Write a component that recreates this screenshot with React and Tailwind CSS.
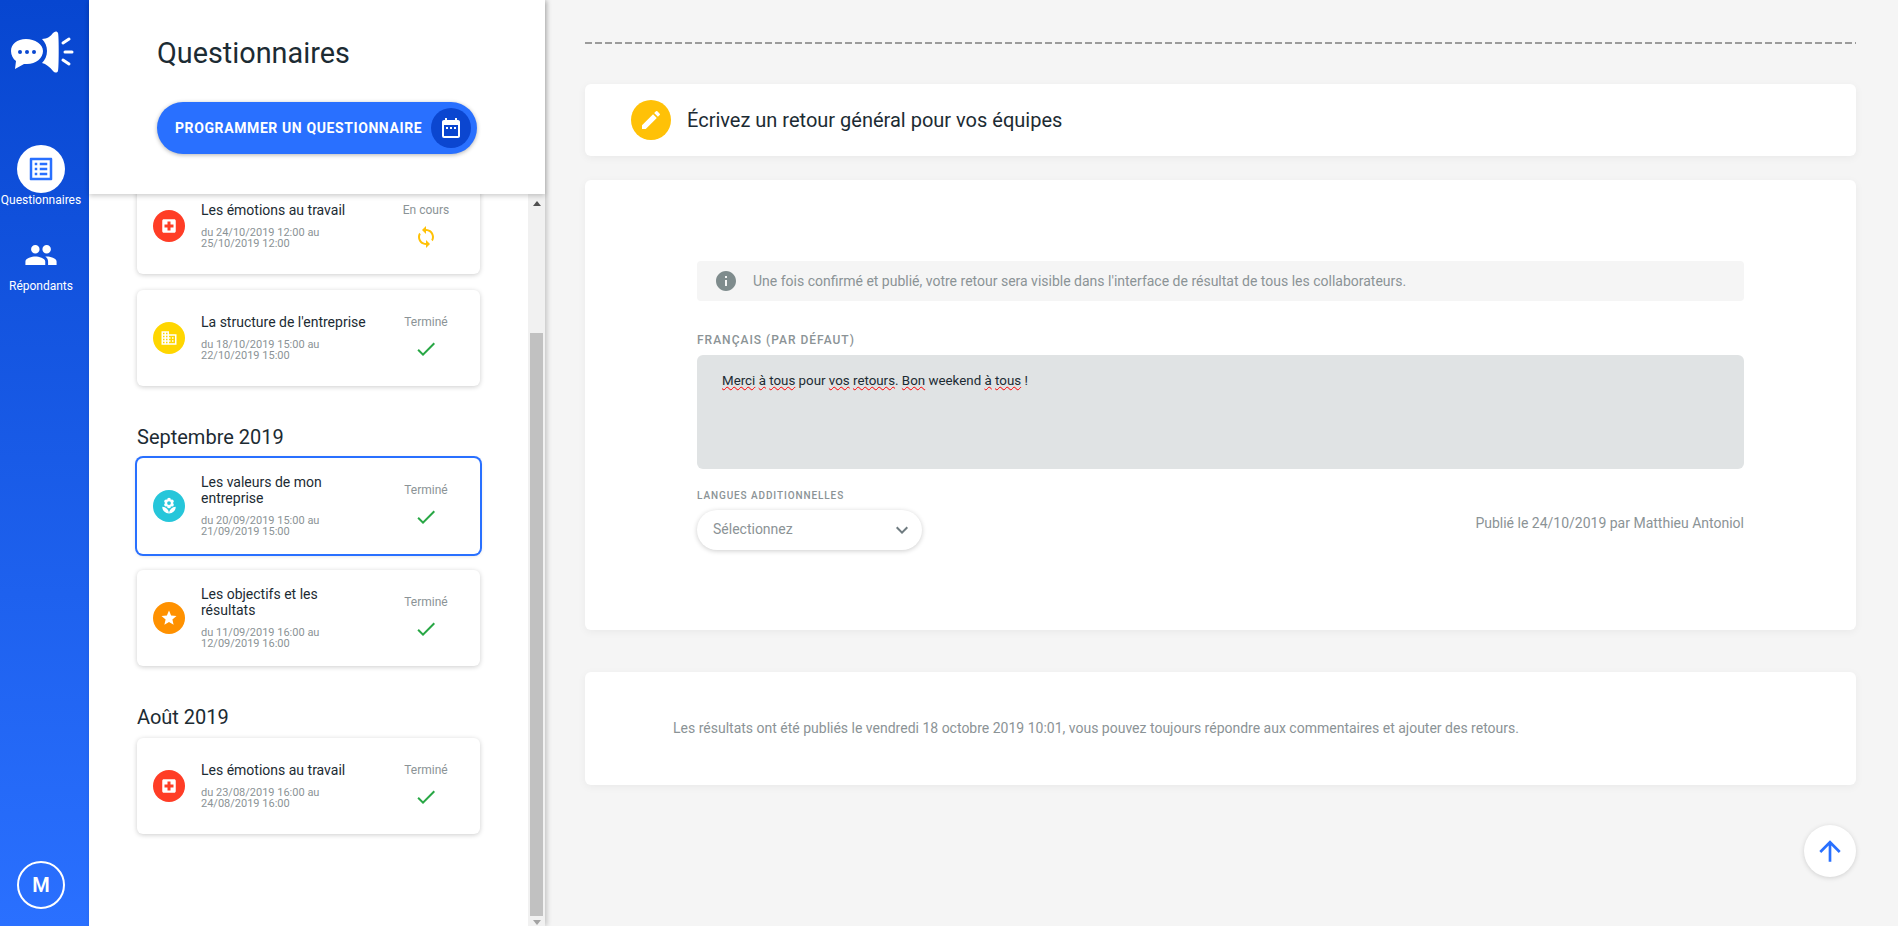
import { MdListAlt, MdPeople, MdEdit, MdInfo, MdArrowUpward, MdCheck, MdSync, MdBusiness, MdLocalHospital, MdLocalFlorist, MdStar, MdKeyboardArrowDown, MdDateRange } from 'react-icons/md';

const Logo = () => (
  <svg width="66" height="42" viewBox="0 0 66 42" fill="white">
    <path d="M17 8C8 8 2 13 2 20c0 4 2 8 5 10l-1 8 9-5h3c9 0 16-6 16-13S26 8 17 8z" />
    <circle cx="11" cy="21" r="2" fill="#0a47d1" />
    <circle cx="18" cy="21" r="2" fill="#0a47d1" />
    <circle cx="25" cy="21" r="2" fill="#0a47d1" />
    <path d="M33 8c5 0 9-3 11-6 2-2 4-2 5 0 1 2 1 36 0 38-1 2-3 2-5 0-3-4-7-7-11-8 3-3 5-7 5-12S36 11 33 8z" />
    <path d="M54 12l6-4M56 21h7M54 29l6 4" stroke="white" strokeWidth="3" strokeLinecap="round" />
  </svg>
);

const cards = [
  { icon: MdLocalHospital, color: 'bg-[#ff3d26]', title: 'Les émotions au travail', from: 'du 24/10/2019 12:00 au', to: '25/10/2019 12:00', status: 'En cours' },
  { icon: MdBusiness, color: 'bg-[#ffd600]', title: "La structure de l'entreprise", from: 'du 18/10/2019 15:00 au', to: '22/10/2019 15:00', status: 'Terminé' },
];

const september = [
  { icon: MdLocalFlorist, color: 'bg-[#26c6da]', title: 'Les valeurs de mon entreprise', from: 'du 20/09/2019 15:00 au', to: '21/09/2019 15:00', status: 'Terminé', selected: true },
  { icon: MdStar, color: 'bg-[#ff9100]', title: 'Les objectifs et les résultats', from: 'du 11/09/2019 16:00 au', to: '12/09/2019 16:00', status: 'Terminé' },
];

const august = [
  { icon: MdLocalHospital, color: 'bg-[#ff3d26]', title: 'Les émotions au travail', from: 'du 23/08/2019 16:00 au', to: '24/08/2019 16:00', status: 'Terminé' },
];

const SurveyCard = ({ item }) => {
  const Icon = item.icon;
  return (
    <div className={`flex items-center h-24 w-[343px] bg-white rounded-md shadow-[0_1px_5px_rgba(0,0,0,0.2)] ${item.selected ? 'ring-2 ring-[#2970ff]' : ''}`}>
      <div className={`ml-4 flex items-center justify-center w-8 h-8 rounded-full text-white ${item.color}`}>
        <Icon size={18} />
      </div>
      <div className="ml-4 w-[168px] pb-px">
        <div className="text-sm leading-4 text-[#1c2b33]">{item.title}</div>
        <div className="mt-[9px] text-[11px] leading-[11px] text-[#8b9396]">
          {item.from}
          <br />
          {item.to}
        </div>
      </div>
      <div className="ml-[11px] w-[92px] flex flex-col items-center mb-[2px]">
        <div className="text-xs leading-4 text-[#8b9396]">{item.status}</div>
        <div className="mt-[7px]">
          {item.status === 'En cours' ? (
            <MdSync size={24} className="text-[#ffc107]" />
          ) : (
            <MdCheck size={24} className="text-[#28a745]" />
          )}
        </div>
      </div>
    </div>
  );
};

const Section = ({ title, items }) => (
  <div className="mt-[39px]">
    <h2 className="text-xl leading-6 text-[#1c2b33] mb-[9px]">{title}</h2>
    <div className="flex flex-col gap-4">
      {items.map((c) => (
        <SurveyCard key={c.from} item={c} />
      ))}
    </div>
  </div>
);

const WavyWord = ({ children }) => (
  <span className="underline decoration-wavy decoration-[#ff0000] decoration-1 underline-offset-1 [text-decoration-skip-ink:none]">{children}</span>
);

export default function App() {
  return (
    <div className="flex h-[926px] w-[1898px] overflow-hidden bg-[#f5f5f5] font-['Roboto',sans-serif]">
      {/* sidebar */}
      <div className="flex flex-col items-center w-[89px] shrink-0 pr-[7px] bg-linear-to-b from-[#0746d0] to-[#2a70ff] text-white">
        <div className="mt-[31px] ml-[1px]">
          <Logo />
        </div>
        <div className="mt-[72px] flex items-center justify-center w-12 h-12 rounded-full bg-white text-[#2970ff]">
          <MdListAlt size={30} />
        </div>
        <div className="mt-[-1px] text-xs leading-4 whitespace-nowrap">Questionnaires</div>
        <MdPeople size={34} className="mt-[30px]" />
        <div className="mt-[6px] text-xs leading-4">Répondants</div>
        <div className="mt-auto mb-[17px] flex items-center justify-center w-12 h-12 rounded-full border-2 border-white text-xl font-semibold">
          M
        </div>
      </div>

      {/* list panel */}
      <div className="relative z-10 flex flex-col w-[456px] shrink-0 bg-white shadow-[2px_0_5px_rgba(0,0,0,0.2)]">
        <div className="relative z-10 h-[194px] shrink-0 bg-white pl-[68px] shadow-[0_2px_5px_rgba(0,0,0,0.2)]">
          <h1 className="pt-[34px] text-[28.8px] leading-[38px] text-[#1c2b33]">Questionnaires</h1>
          <button className="mt-[30px] flex items-center justify-between w-[320px] h-[52px] pl-[18px] pr-[6px] rounded-full bg-[#2970ff] text-white text-sm font-bold tracking-[0.6px] shadow-[0_1px_4px_rgba(0,0,0,0.3)]">
            PROGRAMMER UN QUESTIONNAIRE
            <span className="flex items-center justify-center w-10 h-10 rounded-full bg-[#0b46d0]">
              <MdDateRange size={24} />
            </span>
          </button>
        </div>
        <div className="flex flex-1 min-h-0">
          <div className="flex-1 min-w-0 overflow-hidden pl-[48px]">
            <div className="-mt-4 flex flex-col gap-4">
              {cards.map((c) => (
                <SurveyCard key={c.from} item={c} />
              ))}
            </div>
            <Section title="Septembre 2019" items={september} />
            <Section title="Août 2019" items={august} />
          </div>
          {/* scrollbar */}
          <div className="flex flex-col items-center w-[17px] shrink-0 bg-[#f1f1f1]">
            <div className="mt-[7px] w-0 h-0 border-x-4 border-x-transparent border-b-[5px] border-b-[#505050]" />
            <div className="mt-[127px] w-[13px] h-[583px] bg-[#c1c1c1]" />
            <div className="mt-[4px] w-0 h-0 border-x-4 border-x-transparent border-t-[5px] border-t-[#a3a3a3]" />
          </div>
        </div>
      </div>

      {/* main */}
      <div className="flex flex-col flex-1 min-w-0 pl-10 pr-[42px]">
        {/* bottom edge of the card scrolled off the top */}
        <div className="h-0 shrink-0 shadow-[0_1px_8px_rgba(0,0,0,0.06)]" />
        <div className="mt-[42px] h-[2px] shrink-0 bg-[repeating-linear-gradient(90deg,#9b9b9b_0,#9b9b9b_7px,transparent_7px,transparent_10px)]" />
        <div className="mt-10 flex items-center h-[72px] shrink-0 rounded-md bg-white pl-[46px] shadow-[0_2px_8px_rgba(0,0,0,0.05)]">
          <div className="flex items-center justify-center w-10 h-10 rounded-full bg-[#ffc107] text-white">
            <MdEdit size={24} />
          </div>
          <div className="ml-4 text-xl text-[#1c2b33]">Écrivez un retour général pour vos équipes</div>
        </div>

        <div className="mt-6 h-[450px] shrink-0 rounded-md bg-white px-[112px] pt-[81px] shadow-[0_2px_8px_rgba(0,0,0,0.05)]">
          <div className="flex items-center h-10 rounded bg-[#f5f5f5] pl-[17px] text-sm text-[#8b9396]">
            <MdInfo size={24} className="text-[#7f8c8d]" />
            <span className="ml-[15px]">Une fois confirmé et publié, votre retour sera visible dans l'interface de résultat de tous les collaborateurs.</span>
          </div>
          <div className="mt-[31px] text-xs leading-4 font-medium tracking-[1px] text-[#8b9396]">FRANÇAIS (PAR DÉFAUT)</div>
          <div className="mt-[7px] h-[114px] rounded-md bg-[#e0e3e4] px-[25px] pt-[18px] text-[13.33px] leading-4 text-[#1c2b33]">
            <WavyWord>Merci</WavyWord> <WavyWord>à</WavyWord> <WavyWord>tous</WavyWord> pour <WavyWord>vos</WavyWord>{' '}
            <WavyWord>retours</WavyWord>. <WavyWord>Bon</WavyWord> weekend <WavyWord>à</WavyWord> <WavyWord>tous</WavyWord> !
          </div>
          <div className="mt-[21px] flex justify-between">
            <div>
              <div className="text-[10px] leading-3 font-medium tracking-[0.9px] text-[#8b9396]">LANGUES ADDITIONNELLES</div>
              <div className="mt-2 flex items-center justify-between w-[225px] h-10 rounded-full bg-white pl-4 pr-[8px] text-sm text-[#8b9396] shadow-[0_1px_5px_rgba(0,0,0,0.2)]">
                <span className="pb-[2px]">Sélectionnez</span>
                <MdKeyboardArrowDown size={24} className="text-[#6f7b80]" />
              </div>
            </div>
            <div className="pt-[25px] text-sm leading-4 text-[#8b9396]">Publié le 24/10/2019 par Matthieu Antoniol</div>
          </div>
        </div>

        <div className="mt-[42px] flex items-center h-[113px] shrink-0 rounded-md bg-white pl-[88px] pb-[2px] text-sm text-[#8b9396] shadow-[0_2px_8px_rgba(0,0,0,0.05)]">
          Les résultats ont été publiés le vendredi 18 octobre 2019 10:01, vous pouvez toujours répondre aux commentaires et ajouter des retours.
        </div>

        <button className="mt-10 self-end flex items-center justify-center w-[52px] h-[52px] rounded-full bg-white text-[#2970ff] shadow-[0_1px_5px_rgba(0,0,0,0.15)]">
          <MdArrowUpward size={32} />
        </button>
      </div>
    </div>
  );
}
